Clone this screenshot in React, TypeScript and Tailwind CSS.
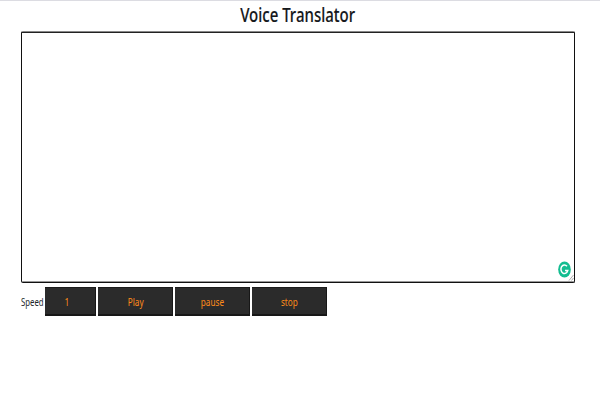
import React from "react";

function Action({ label }: { label: string }) {
  return (
    <button className="flex h-[29px] w-[75px] items-center justify-center border-b-2 border-r border-[#171717] border-t border-t-[#1b1b1b] bg-[#2b2b2b] pt-[3px] text-[#ff8c1a]">
      <span className="inline-block translate-x-[0.5px] scale-x-[0.78] text-[10.5px] leading-none">{label}</span>
    </button>
  );
}

export default function App() {
  return (
    <main className="h-[400px] w-[600px] overflow-hidden border-t border-[#dcdce2] bg-white pl-[21px] font-['Noto_Sans','Open_Sans',sans-serif] text-[#212529]">
      <h1 className="flex h-[30px] w-[554px] items-center justify-center pb-[3px] text-[20px] font-medium leading-none text-[#15181b]">
        <span className="inline-block scale-x-[0.75] whitespace-nowrap [-webkit-text-stroke:0.15px_#15181b]">Voice Translator</span>
      </h1>
      <section className="h-[252px] w-[554px] rounded-[2px] border border-[#111] border-t-[#888] bg-white">
        <div className="flex h-full items-end justify-end border-b border-t border-b-[#999] border-t-[#222]">
          <svg width="17" height="22" viewBox="0 0 17 22" className="block">
            <ellipse cx="7.5" cy="10.5" rx="6.3" ry="8" fill="#13bd91" />
            <path d="M10 7.3A3.5 4.3 0 1 0 10.8 11.4H8" fill="none" stroke="#fff" strokeWidth="1.5" />
            <path d="M12 21.5L16.5 16M14.5 21.5L16.5 19" stroke="#888" strokeWidth=".7" />
          </svg>
        </div>
      </section>
      <div className="mt-1 flex h-[29px] gap-[2px]">
        <label className="flex w-[22px] items-center pt-px text-[10.5px] leading-none">
          <span className="inline-block origin-left scale-x-[0.74]">Speed</span>
        </label>
        <div className="flex w-[51px] items-center border-b-2 border-r border-[#171717] border-t border-t-[#1b1b1b] bg-[#2b2b2b] pl-[19px] pt-[3px] text-[10.5px] leading-none text-[#ff8c1a]">
          <span className="inline-block scale-x-[0.8]">1</span>
        </div>
        <Action label="Play" />
        <Action label="pause" />
        <Action label="stop" />
      </div>
    </main>
  );
}
